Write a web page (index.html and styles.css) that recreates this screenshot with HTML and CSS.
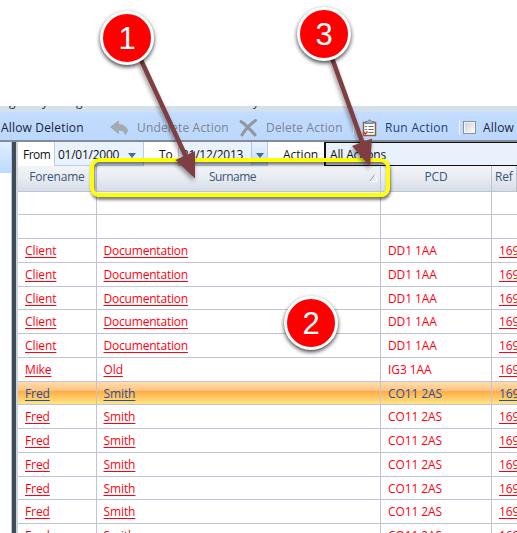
FILE: index.html
```
<!DOCTYPE html>
<html lang="en">
<head>
<meta charset="utf-8">
<title>Actions</title>
<link rel="stylesheet" href="styles.css">
</head>
<body>
<div class="screen">
  <div class="title-strip"><span class="t1">g</span><span class="t2">y</span><span class="t3">g</span><span class="t4">y</span></div>
  <div class="toolbar">
    <span class="tool allow-del">Allow Deletion</span>
    <svg class="undo" width="19" height="16" viewBox="0 0 19 16"><path d="M.5 7 8.500 1v3.500C14 4.500 17.500 8 17.500 11L15.500 14.500C14.500 11.500 12 10 8.500 10v3.500z" fill="#a5aab2" stroke="#979da6" stroke-width=".6"/></svg>
    <span class="tool off undelete">Undelete Action</span>
    <svg class="cross" width="19" height="18" viewBox="0 0 19 18"><path d="M2 2.500C7 6 11 10 16 16M16.500 1.500C10 6 6 11 3 16" fill="none" stroke="#92969c" stroke-width="3" stroke-linecap="round"/></svg>
    <span class="tool off delete">Delete Action</span>
    <i class="sep"></i>
    <svg class="clip" width="16" height="18" viewBox="0 0 16 18"><path d="M1.500 3.500h12v13h-12z" fill="#fff" stroke="#87633c" stroke-width="1.500"/><path d="M3.500 4.500V2.500h2Q7.500-.8 9.500 2.500h2v2z" fill="#9eacba" stroke="#68737f" stroke-width=".8"/><path d="M6.500 7.500h5M6.500 10.500h5M6.500 13.500h5" stroke="#666" stroke-width="1.200"/><path d="M3 7.500h2M3 10.500h2" stroke="#777"/><path d="m2 13 1.300 2L5.500 12.500" fill="none" stroke="#e02020" stroke-width="1.300"/></svg>
    <span class="tool run">Run Action</span>
    <i class="sep"></i>
    <i class="check"></i>
    <span class="tool">Allow</span>
  </div>
  <div class="body">
    <div class="side"><div class="side-tab"></div></div>
    <div class="rail"></div>
    <div class="main">
      <div class="filters">
        <span class="label from">From</span>
        <div class="combo"><span>01/01/2000</span><b class="plain"><i></i></b></div>
        <span class="label to">To</span>
        <div class="combo second"><span>31/12/2013</span><b><i></i></b></div>
        <span class="label action">Action</span>
        <div class="select">All Actions</div>
      </div>
      <div class="row head"><span>Forename</span><span>Surname</span><span>PCD</span><span>Ref</span>
        <svg class="sort" width="9" height="8" viewBox="0 0 9 8"><path d="M.5 7.500 6 .5" stroke="#969eaa"/><path d="M6 .5 8 7.500H.5" fill="none" stroke="#fff"/></svg>
      </div>
      <div class="row"><span></span><span></span><span></span><span></span></div>
      <div class="row"><span></span><span></span><span></span><span></span></div>
      <div class="row"><span><u>Client</u></span><span><u class="doc">Documentation</u></span><span>DD1 1AA</span><span><u>169</u></span></div>
      <div class="row"><span><u>Client</u></span><span><u class="doc">Documentation</u></span><span>DD1 1AA</span><span><u>169</u></span></div>
      <div class="row"><span><u>Client</u></span><span><u class="doc">Documentation</u></span><span>DD1 1AA</span><span><u>169</u></span></div>
      <div class="row"><span><u>Client</u></span><span><u class="doc">Documentation</u></span><span>DD1 1AA</span><span><u>169</u></span></div>
      <div class="row"><span><u>Client</u></span><span><u class="doc">Documentation</u></span><span>DD1 1AA</span><span><u>169</u></span></div>
      <div class="row"><span><u>Mike</u></span><span><u>Old</u></span><span>IG3 1AA</span><span><u>169</u></span></div>
      <div class="row selected"><span><u>Fred</u></span><span><u>Smith</u></span><span>CO11 2AS</span><span><u>169</u></span></div>
      <div class="row"><span><u>Fred</u></span><span><u>Smith</u></span><span>CO11 2AS</span><span><u>169</u></span></div>
      <div class="row"><span><u>Fred</u></span><span><u>Smith</u></span><span>CO11 2AS</span><span><u>169</u></span></div>
      <div class="row"><span><u>Fred</u></span><span><u>Smith</u></span><span>CO11 2AS</span><span><u>169</u></span></div>
      <div class="row"><span><u>Fred</u></span><span><u>Smith</u></span><span>CO11 2AS</span><span><u>169</u></span></div>
      <div class="row"><span><u>Fred</u></span><span><u>Smith</u></span><span>CO11 2AS</span><span><u>169</u></span></div>
      <div class="row"><span><u>Fred</u></span><span><u>Smith</u></span><span>CO11 2AS</span><span><u>169</u></span></div>
    </div>
  </div>
  <div class="highlight"></div>
  <svg class="arrows" width="517" height="533" viewBox="0 0 517 533">
    <g fill="#7f3f42" stroke="#7f3f42">
      <path d="M141 60 187 159" stroke-width="4.500"/><path d="M195 178.500 175.500 160 195 151z" stroke="none"/>
      <path d="M332 58 363 144" stroke-width="4.500"/><path d="M370 166.500 352 146 372 138.500z" stroke="none"/>
    </g>
  </svg>
  <div class="badge one">1</div>
  <div class="badge two">2</div>
  <div class="badge three">3</div>
</div>
</body>
</html>
```
FILE: styles.css
```
* { box-sizing: border-box; }
body { margin: 0; background: #fff; font: 12px/16px "Open Sans", "Noto Sans", sans-serif; }
.screen { position: relative; width: 517px; height: 533px; padding-top: 106px; overflow: hidden; }
.title-strip { height: 6px; overflow: hidden; background: #d3e0ed; color: #333; line-height: 12px; display: flex; }
.title-strip span { margin-top: -10px; width: 30px; }
.title-strip .t1 { margin-left: 9px; width: 33px; }
.title-strip .t2 { width: 34px; }
.title-strip .t3 { width: 177px; }
.toolbar { height: 28px; display: flex; align-items: center; background: linear-gradient(#c3dcff, #bbd8fc); white-space: nowrap; padding: 3px 0 0 1px; }
.tool { color: #17233c; letter-spacing: .17px; flex: none; }
.off { color: #7c8590; }
.run { color: #1f3c78; width: 74px; letter-spacing: .3px; }
.allow-del { width: 109px; }
.undo { flex: none; width: 19px; margin-right: 8px; }
.undelete { width: 102px; }
.cross { flex: none; margin-right: 8px; }
.delete { width: 87px; }
.sep { flex: none; width: 1px; height: 15px; background: #f0f6ff; }
.clip { flex: none; margin: 0 7px 0 8px; }
.check { flex: none; width: 13px; height: 13px; margin: 0 7px 0 3px; border: 1px solid #8b9199; background: linear-gradient(135deg, #c9d0d8, #fff); box-shadow: inset 0 0 0 1px #f5f5f5; }
.body { display: flex; height: 393px; border-top: 2px solid #858b94; }
.side { width: 12px; flex: none; border-right: 1px solid #a9c8ec; }
.side-tab { height: 31px; background: linear-gradient(#e2efff, #bcd9fc); }
.rail { width: 6px; flex: none; background: #424c57; border-right: 2px solid #cdd3dc; }
.main { width: 499px; flex: none; }
.filters { height: 24px; display: flex; white-space: nowrap; color: #111; padding-left: 5px; }
.label { padding-top: 5px; flex: none; }
.from { width: 31px; letter-spacing: -.5px; }
.combo { width: 90px; height: 24px; flex: none; border: 1px solid #b8cde8; border-top: 0; background: #e9f2fd; display: flex; justify-content: space-between; }
.combo span { padding: 5px 0 0 3px; letter-spacing: -.25px; }
.combo b { width: 16px; border-left: 1px solid #aecaeb; background: linear-gradient(#e9f3ff, #c7dcf6); display: grid; place-items: center; }
.combo .plain { border: 0; background: none; margin-right: 3px; }
.combo b i { border: 4px solid transparent; border-top: 5px solid #426c9e; border-bottom: 0; margin-top: 4px; }
.to { width: 34px; padding-left: 15px; }
.action { width: 56px; padding-left: 15px; }
.select { flex: 1; border: 1px solid #111; border-width: 1px 0 1px 2px; background: #e8f1fc; padding: 4px 0 0 4px; line-height: 16px; letter-spacing: -.15px; }
.row { display: grid; grid-template-columns: 79px 284px 111px 25px; height: 23.75px; border-bottom: 1px solid #bfc4d5; color: #ff0010; line-height: 24px; }
.row span { border-right: 1px solid #bfc4d5; padding-left: 7px; white-space: nowrap; overflow: hidden; letter-spacing: -.1px; }
.row span:nth-child(2) { padding-left: 6.5px; }
.row span:last-child { border-right: 0; }
.row u { text-underline-offset: 1.5px; text-decoration-thickness: 1px; }
.row .doc { letter-spacing: -.2px; }
.head { position: relative; height: 25.5px; background: linear-gradient(#f2f4f8, #e7ebf2 50%, #d6dde8); color: #3c5579; line-height: 22px; }
.head span, .head span:nth-child(2) { padding: 0; text-align: center; letter-spacing: -.2px; }
.head span:nth-child(2) { padding-right: 12px; letter-spacing: -.5px; }
.head span:nth-child(4) { text-align: left; padding-left: 3px; }
.sort { position: absolute; left: 351px; top: 8px; }
.row.selected { color: #2450a8; background: linear-gradient(#ffdcae, #ffc583 38%, #ffab43 42%, #ffe181 95%); }
.highlight { position: absolute; left: 90px; top: 158px; width: 300px; height: 39px; border: 4px solid #ff0; border-radius: 9px; box-shadow: 1px 3px 3px rgba(0,0,0,.5), inset 1px 3px 3px rgba(0,0,0,.5); }
.arrows { position: absolute; left: 0; top: 0; filter: drop-shadow(-1px 3px 2px rgba(0,0,0,.4)); }
.badge { position: absolute; width: 54px; height: 54px; border: 3px solid #fff; border-radius: 50%; background: #f00; color: #fff; font: 31px/49px "Liberation Sans", Arial, sans-serif; text-align: center; box-shadow: 0 2px 4px rgba(0,0,0,.75); }
.one { left: 100px; top: 11px; }
.two { left: 284px; top: 296px; }
.three { left: 297px; top: 7px; }
```
